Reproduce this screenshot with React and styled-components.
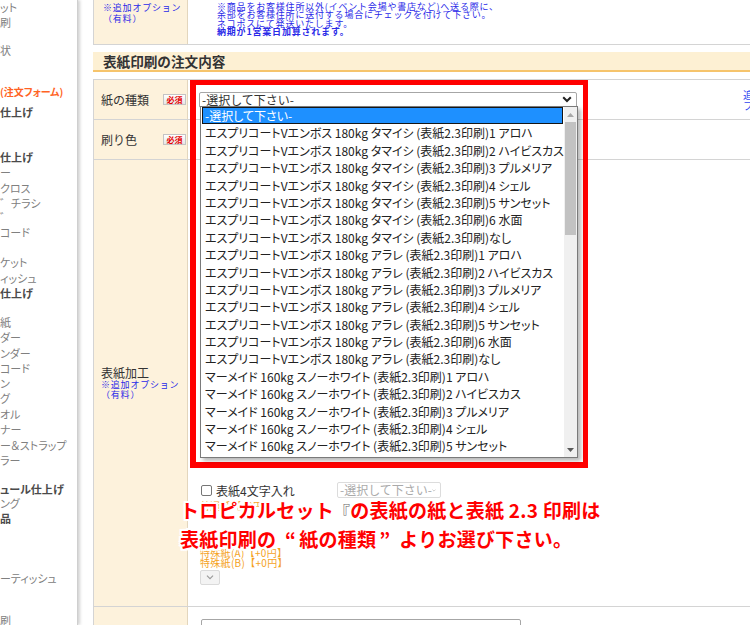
import React from 'react';
import styled, { createGlobalStyle } from 'styled-components';

const GlobalStyle = createGlobalStyle`
  html, body { margin: 0; padding: 0; overflow: hidden; background: #fff; }
  body { font-family: "Noto Sans CJK JP", "Noto Sans", sans-serif; color: #333; }
`;

const Page = styled.div`
  position: relative;
  width: 750px;
  height: 625px;
  overflow: hidden;
  display: flex;
  background: #fff;
`;

const Sidebar = styled.nav`
  flex: 0 0 77px;
  border-right: 1px solid #cfcfcf;
  box-shadow: 2px 0 3px rgba(0, 0, 0, 0.18);
  background: #fff;
  overflow: hidden;
  z-index: 1;
`;

const SideItem = styled.div`
  height: 15px;
  line-height: 15px;
  margin-top: ${(p) => p.$gap}px;
  font-size: ${(p) => (p.$tone === 'accent' ? 10 : 11)}px;
  white-space: nowrap;
  font-feature-settings: "palt";
  color: ${(p) => (p.$tone === 'accent' ? '#ff6324' : p.$tone === 'bold' ? '#4a4a4a' : '#808080')};
  font-weight: ${(p) => (p.$tone === 'regular' ? 400 : 700)};
`;

const Main = styled.main`
  flex: 1;
  min-width: 0;
  padding-left: 15px;
  display: flex;
  flex-direction: column;
`;

const Row = styled.div`
  flex: 0 0 auto;
  display: grid;
  grid-template-columns: 95px 1fr;
  height: ${(p) => p.$h}px;
  border-bottom: 1px solid #d4d4d4;
  box-sizing: content-box;
`;

const LabelCell = styled.div`
  background: #fdf2dc;
  border-left: 1px solid #d4d4d4;
  border-right: 1px solid #e3d6bd;
  display: flex;
  flex-direction: ${(p) => (p.$stack ? 'column' : 'row')};
  justify-content: ${(p) => (p.$stack ? 'center' : 'space-between')};
  align-items: ${(p) => (p.$stack ? 'flex-start' : 'center')};
  padding: ${(p) => (p.$top ? '2px 1px 0 9px' : '0 1px 0 7px')};
  ${(p) => (p.$top ? 'justify-content: flex-start;' : '')}
`;

const LabelText = styled.span`
  font-size: 12px;
  color: #333;
  line-height: 14px;
  white-space: nowrap;
`;

const BlueNote = styled.div`
  font-size: 9px;
  line-height: ${(p) => p.$lh || 10}px;
  letter-spacing: 0.8px;
  color: #2a2ae8;
  font-weight: ${(p) => (p.$bold ? 700 : 400)};
  white-space: nowrap;
`;

const Badge = styled.span`
  width: 23px;
  height: 11px;
  box-sizing: border-box;
  border: 1px solid #c4c4c4;
  background: linear-gradient(#ffffff, #e6e6e6);
  color: #e60000;
  font-size: 8px;
  line-height: 9px;
  text-align: center;
  font-weight: 700;
`;

const ValueCell = styled.div`
  display: flex;
  flex-direction: ${(p) => (p.$column ? 'column' : 'row')};
  align-items: ${(p) => (p.$column ? 'flex-start' : 'center')};
  padding: ${(p) => p.$pad || '0 0 0 11px'};
  min-width: 0;
`;

const TopText = styled.div`
  padding: 3px 0 0 29px;
  display: flex;
  flex-direction: column;
`;

const SectionHeader = styled.h2`
  flex: 0 0 auto;
  margin: 7px 0 0 0;
  height: 18px;
  border-bottom: 2px solid #f6c46c;
  background: #fdf0d3;
  padding-left: 10px;
  font-size: 13.6px;
  line-height: 18px;
  font-weight: 700;
  color: #333;
  white-space: nowrap;
`;

const Table = styled.div`
  flex: 0 0 auto;
  margin-top: 7px;
  border-top: 1px solid #d4d4d4;
  display: flex;
  flex-direction: column;
`;

const SelectBox = styled.div`
  width: ${(p) => p.$w}px;
  height: 16px;
  flex: 0 0 auto;
  box-sizing: border-box;
  border: 1px solid ${(p) => (p.$disabled ? '#dcdcdc' : '#a6a6a6')};
  border-radius: 2px;
  background: #fff;
  display: flex;
  align-items: center;
  justify-content: space-between;
  padding: 0 4px 0 2px;
  font-size: 12px;
  line-height: 14px;
  color: ${(p) => (p.$disabled ? '#aaa' : '#333')};
  white-space: nowrap;
  overflow: hidden;
`;

const SideNote = styled.div`
  margin-left: ${(p) => p.$ml}px;
  font-size: 10px;
  line-height: 11px;
  color: #2f46f0;
  white-space: nowrap;
`;

const CheckRow = styled.div`
  display: flex;
  align-items: center;
  height: 16px;
  white-space: nowrap;
`;

const CheckBox = styled.span`
  width: 11px;
  height: 11px;
  box-sizing: border-box;
  border: 1px solid #767676;
  border-radius: 2px;
  background: #fff;
  margin: 0 4px 0 1px;
`;

const CheckLabel = styled.span`
  font-size: 12px;
  color: #333;
  width: 121px;
`;

const OrangeLine = styled.div`
  font-size: 10px;
  line-height: 10px;
  letter-spacing: 0.3px;
  color: #f5a21e;
  margin-top: ${(p) => p.$mt || 0}px;
  white-space: nowrap;
`;

const MiniSelect = styled.div`
  margin-top: 2px;
  width: 20px;
  height: 15px;
  box-sizing: border-box;
  border: 1px solid #dadada;
  border-radius: 2px;
  background: #f3f3f3;
  display: flex;
  align-items: center;
  justify-content: center;
`;

/* ---------- overlays ---------- */

const RedFrame = styled.div`
  position: absolute;
  left: 190px;
  top: 80px;
  width: 398px;
  height: 388px;
  box-sizing: border-box;
  border-style: solid;
  border-color: #ff0000;
  border-width: 5px 5px 6px 6px;
  z-index: 2;
  pointer-events: none;
`;

const DropList = styled.div`
  position: absolute;
  left: 200px;
  top: 106px;
  width: 378px;
  height: 352px;
  box-sizing: border-box;
  border: 1px solid #7a7a7a;
  background: #fff;
  box-shadow: 3px 3px 4px rgba(0, 0, 0, 0.28);
  display: flex;
  z-index: 3;
`;

const Options = styled.div`
  flex: 1;
  overflow: hidden;
  min-width: 0;
`;

const Option = styled.div`
  height: 17.4px;
  line-height: 17.4px;
  font-size: 12px;
  padding-left: 3px;
  margin: 0 1px;
  white-space: nowrap;
  font-feature-settings: "palt";
  color: ${(p) => (p.$active ? '#fff' : '#222')};
  background: ${(p) => (p.$active ? '#1e90ff' : 'transparent')};
  box-shadow: ${(p) => (p.$active ? 'inset 0 0 0 1px #151515' : 'none')};
`;

const ScrollTrack = styled.div`
  flex: 0 0 13px;
  background: #f0f0f0;
  display: flex;
  flex-direction: column;
`;

const ScrollArrow = styled.div`
  height: 15px;
  display: flex;
  align-items: center;
  justify-content: center;
`;

const ScrollThumb = styled.div`
  height: 113px;
  margin: 0 1px;
  background: #c2c2c2;
`;

const ScrollRest = styled.div`
  flex: 1;
`;

const Annotation = styled.div`
  position: absolute;
  left: 180px;
  top: 496px;
  z-index: 4;
  font-size: 19px;
  line-height: 28px;
  font-weight: 700;
  letter-spacing: 0.25px;
  color: #ff0000;
  white-space: nowrap;
  text-shadow: 0 0 2px #fff, 2px 0 0 #fff, -2px 0 0 #fff, 0 2px 0 #fff, 0 -2px 0 #fff,
    2px 2px 0 #fff, -2px -2px 0 #fff, 2px -2px 0 #fff, -2px 2px 0 #fff, 0 0 4px #fff;
`;

const Ghost = styled.span`
  color: #666;
  font-weight: 400;
  font-size: 16px;
`;

const Quote = styled.span`
  display: inline-block;
  width: 23px;
  text-align: ${(p) => (p.$open ? 'right' : 'left')};
  padding: ${(p) => (p.$open ? '0 3px 0 0' : '0 0 0 3px')};
  box-sizing: border-box;
`;

const Chevron = ({ color = '#222', w = 10, sw = 2 }) => (
  <svg width={w} height="7" viewBox="0 0 10 7">
    <path d="M1.2 1.2 L5 5 L8.8 1.2" fill="none" stroke={color} strokeWidth={sw} />
  </svg>
);

const Tri = ({ up, color }) => (
  <svg width="7" height="4" viewBox="0 0 7 4">
    <path d={up ? 'M0 4 L3.5 0 L7 4 Z' : 'M0 0 L3.5 4 L7 0 Z'} fill={color} />
  </svg>
);

const sideItems = [
  [7, 'ット', 'regular'],
  [22, '刷', 'regular'],
  [50, '状', 'regular'],
  [91, '(注文フォーム)', 'accent'],
  [112, '仕上げ', 'bold'],
  [157, '仕上げ', 'bold'],
  [172, 'ー', 'regular'],
  [188, 'クロス', 'regular'],
  [203, '゛チラシ', 'regular'],
  [217, '゛', 'regular'],
  [232, 'コード', 'regular'],
  [262, 'ケット', 'regular'],
  [278, 'ィッシュ', 'regular'],
  [293, '仕上げ', 'bold'],
  [322, '紙', 'regular'],
  [337, 'ダー', 'regular'],
  [353, 'ンダー', 'regular'],
  [368, 'コード', 'regular'],
  [383, 'ン', 'regular'],
  [398, 'グ', 'regular'],
  [414, 'オル', 'regular'],
  [429, 'ナー', 'regular'],
  [445, 'ー＆ストラップ', 'regular'],
  [460, 'ラー', 'regular'],
  [489, 'ュール仕上げ', 'bold'],
  [503, 'ング', 'regular'],
  [518, '品', 'bold'],
  [578, 'ーティッシュ', 'regular'],
  [620, '刷', 'regular'],
];

const variants = ['1 アロハ', '2 ハイビスカス', '3 プルメリア', '4 シェル', '5 サンセット', '6 水面', 'なし'];
const papers = [
  'エスプリコートVエンボス 180kg タマイシ',
  'エスプリコートVエンボス 180kg アラレ',
  'マーメイド 160kg スノーホワイト',
];
const options = ['-選択して下さい-'];
papers.forEach((p) => variants.forEach((v) => options.push(`${p} (表紙2.3印刷)${v}`)));

export default function App() {
  let prev = 0;
  const side = sideItems.map(([y, t, tone], i) => {
    const gap = y - 7.5 - prev;
    prev = y + 7.5;
    return (
      <SideItem key={i} $gap={gap} $tone={tone}>
        {t}
      </SideItem>
    );
  });

  return (
    <>
      <GlobalStyle />
      <Page>
        <Sidebar>{side}</Sidebar>
        <Main>
          <Row $h={44}>
            <LabelCell $top $stack>
              <BlueNote $lh={11}>※追加オプション</BlueNote>
              <BlueNote $lh={11}>（有料）</BlueNote>
            </LabelCell>
            <TopText>
              <BlueNote $lh={8.3}>※商品をお客様住所以外(イベント会場や書店など)へ送る際に、</BlueNote>
              <BlueNote $lh={8.3}>余部をお客様住所に送付する場合にチェックを付けて下さい。</BlueNote>
              <BlueNote $lh={8.3}>ネコポスにて発送いたします。</BlueNote>
              <BlueNote $lh={8.6} $bold>納期が1営業日加算されます。</BlueNote>
            </TopText>
          </Row>

          <SectionHeader>表紙印刷の注文内容</SectionHeader>

          <Table>
            <Row $h={39}>
              <LabelCell>
                <LabelText>紙の種類</LabelText>
                <Badge>必須</Badge>
              </LabelCell>
              <ValueCell>
                <SelectBox $w={378}>
                  <span>-選択して下さい-</span>
                  <Chevron />
                </SelectBox>
                <SideNote $ml={166}>
                  追加オプション
                  <br />
                  フォーム
                </SideNote>
              </ValueCell>
            </Row>
            <Row $h={39}>
              <LabelCell>
                <LabelText>刷り色</LabelText>
                <Badge>必須</Badge>
              </LabelCell>
              <ValueCell>
                <SideNote $ml={555}>表紙印刷</SideNote>
              </ValueCell>
            </Row>
            <Row $h={446}>
              <LabelCell $stack>
                <LabelText>表紙加工</LabelText>
                <BlueNote $lh={10}>※追加オプション</BlueNote>
                <BlueNote $lh={10}>（有料）</BlueNote>
              </LabelCell>
              <ValueCell $column $pad="322px 0 0 12px">
                <CheckRow>
                  <CheckBox />
                  <CheckLabel>表紙4文字入れ</CheckLabel>
                  <SelectBox $w={104} $disabled>
                    <span>-選択して下さい-</span>
                    <Chevron color="#b5b5b5" w={9} sw={1.6} />
                  </SelectBox>
                </CheckRow>
                <OrangeLine $mt={3}>普通紙【+0円】</OrangeLine>
                <OrangeLine $mt={37}>特殊紙(A)【+0円】</OrangeLine>
                <OrangeLine>特殊紙(B)【+0円】</OrangeLine>
                <MiniSelect>
                  <Chevron color="#999" w={8} sw={1.4} />
                </MiniSelect>
              </ValueCell>
            </Row>
            <Row $h={60}>
              <LabelCell />
              <ValueCell $column $pad="12px 0 0 13px">
                <SelectBox $w={320}>
                  <span />
                </SelectBox>
              </ValueCell>
            </Row>
          </Table>
        </Main>

        <RedFrame />
        <DropList>
          <Options>
            {options.map((o, i) => (
              <Option key={i} $active={i === 0}>
                {o}
              </Option>
            ))}
          </Options>
          <ScrollTrack>
            <ScrollArrow>
              <Tri up color="#a8a8a8" />
            </ScrollArrow>
            <ScrollThumb />
            <ScrollRest />
            <ScrollArrow>
              <Tri color="#5a5a5a" />
            </ScrollArrow>
          </ScrollTrack>
        </DropList>

        <Annotation>
          <div>
            トロピカルセット<Ghost>『</Ghost>の表紙の紙と表紙 2.3 印刷は
          </div>
          <div>
            表紙印刷の<Quote $open>“</Quote>紙の種類<Quote>”</Quote>よりお選び下さい。
          </div>
        </Annotation>
      </Page>
    </>
  );
}
